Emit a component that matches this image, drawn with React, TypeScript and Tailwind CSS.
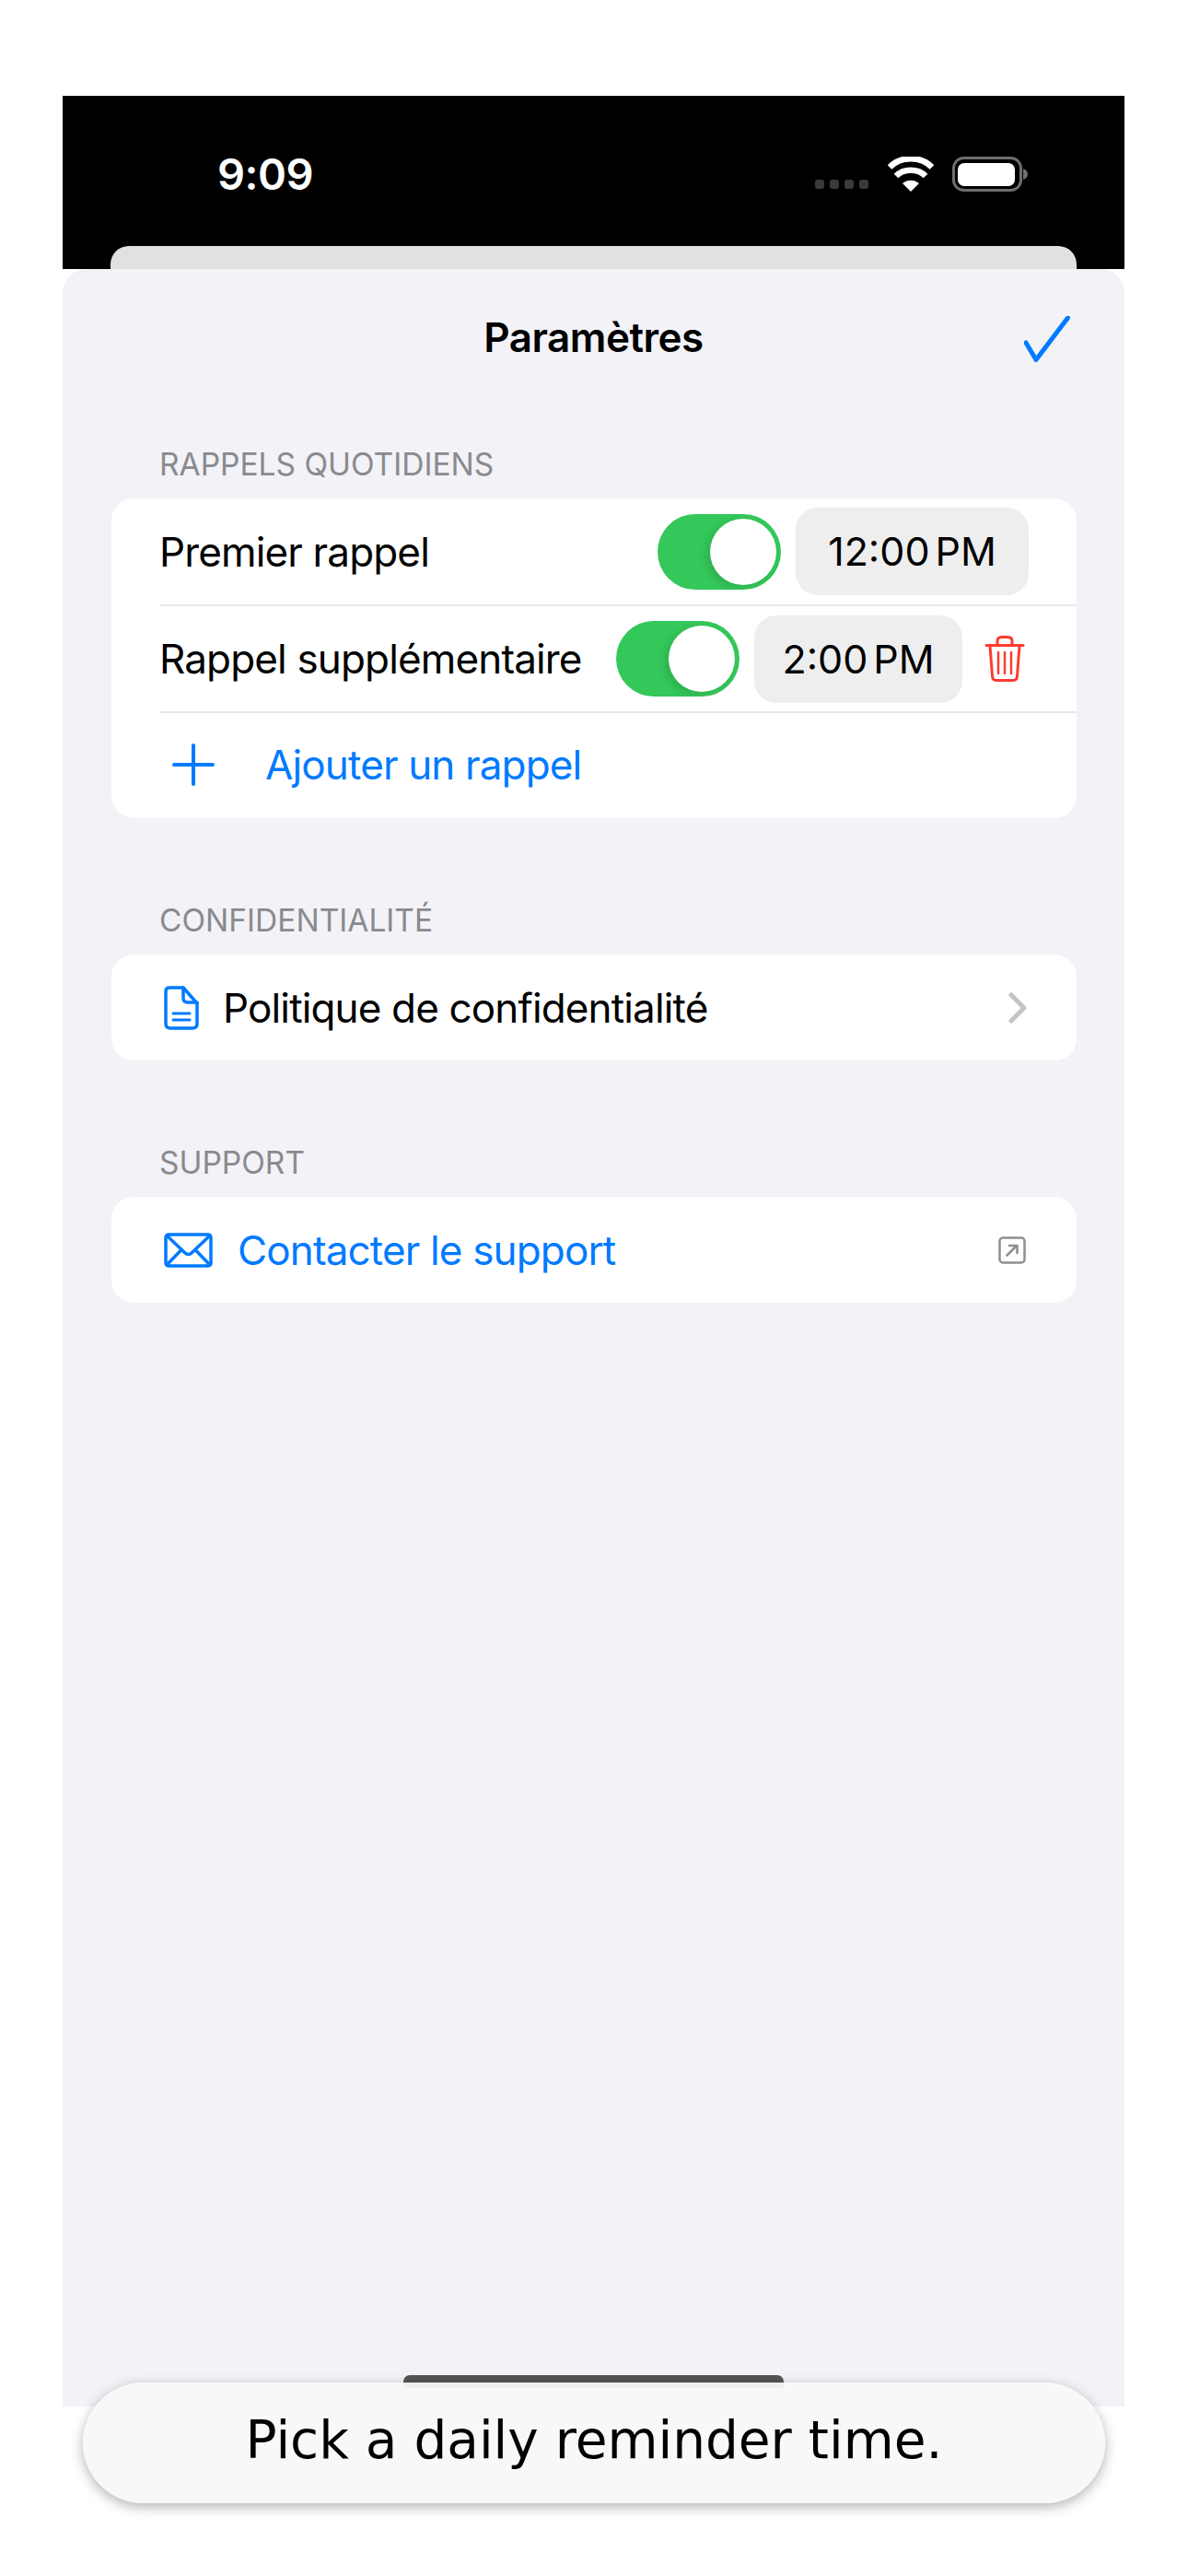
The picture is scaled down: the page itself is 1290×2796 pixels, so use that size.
const sans = "font-['Inter','Liberation_Sans',sans-serif]";

function Toggle() {
  return (
    <div className="flex h-[82px] w-[134px] shrink-0 items-center justify-end rounded-full bg-[#34c759] p-[5px]">
      <div className="h-[72px] w-[72px] rounded-full bg-white shadow-[-4px_3px_8px_rgba(0,0,0,0.12)]" />
    </div>
  );
}

function TimePill({ time, width }: { time: string; width: string }) {
  const [clock, period] = time.split(" ");
  return (
    <div className={`flex h-[95px] shrink-0 items-center justify-center gap-[6px] rounded-[24px] bg-[#eeeeef] text-[43px] text-black ${width}`}>
      <span>{clock}</span>
      <span>{period}</span>
    </div>
  );
}

function SectionLabel({ children }: { children: string }) {
  return (
    <div className="mb-[17px] h-10 pl-[105px] text-[33.5px] leading-10 text-[#8a8a8e]">
      {children}
    </div>
  );
}

function Card({ children }: { children: React.ReactNode }) {
  return <div className="ml-[53px] mr-[52px] overflow-hidden rounded-[24px] bg-white">{children}</div>;
}

function Separator() {
  return <div className="ml-[52px] h-[2px] bg-[#e8e8ea]" />;
}

export default function App() {
  return (
    <div className={`relative h-[2796px] w-[1290px] overflow-hidden bg-white pt-[104px] ${sans}`}>
      <div className="mx-[68px] w-[1153px]">
        {/* Status bar and the card behind the sheet */}
        <div className="bg-black">
          <div className="flex h-[163px] items-center justify-between pl-[168px] pr-[105px] pt-[6px]">
            <span className="mt-[2px] text-[47px] font-semibold tracking-[-0.5px] text-white">9:09</span>
            <div className="flex items-center">
              <div className="mr-[21px] mt-[22px] flex gap-[6px]">
                <div className="h-[10px] w-[10px] rounded-[3px] bg-[#3a3a3c]" />
                <div className="h-[10px] w-[10px] rounded-[3px] bg-[#3a3a3c]" />
                <div className="h-[10px] w-[10px] rounded-[3px] bg-[#3a3a3c]" />
                <div className="h-[10px] w-[10px] rounded-[3px] bg-[#3a3a3c]" />
              </div>
              <svg width="50" height="38" viewBox="0 0 50 38" className="mr-[20px]">
                <path d="M25 38 L16 29 C21 24.5 29 24.5 34 29 Z" fill="#fff" />
                <path d="M9 21 C17 12.5 33 12.5 41 21" fill="none" stroke="#fff" strokeWidth="6.5" />
                <path d="M2 11.5 C14 -1 36 -1 48 11.5" fill="none" stroke="#fff" strokeWidth="6.5" />
              </svg>
              <svg width="82" height="38" viewBox="0 0 82 38">
                <rect x="1.5" y="1.5" width="73" height="35" rx="11" fill="none" stroke="#6e6e70" strokeWidth="3" />
                <rect x="6" y="7" width="62" height="25" rx="7" fill="#fff" />
                <path d="M77 13 C80 14 82 16 82 19 C82 22 80 24 77 25 Z" fill="#6e6e70" />
              </svg>
            </div>
          </div>
          <div className="mx-[52px] h-[25px] rounded-t-[20px] bg-[#e1e1e1]" />
        </div>

        {/* Settings sheet */}
        <div className="flex h-[2320px] flex-col rounded-t-[26px] bg-[#f2f2f7]">
          <div className="relative flex h-[150px] items-center justify-center pb-[2px]">
            <span className="text-[44px] font-semibold tracking-[-0.5px] text-black">Paramètres</span>
            <svg width="50" height="50" viewBox="0 0 50 50" className="absolute right-[59px] top-[51px]">
              <path d="M2 29 L13 47.5 L47.5 2" fill="none" stroke="#007aff" strokeWidth="5" strokeLinecap="round" strokeLinejoin="round" />
            </svg>
          </div>

          <div className="mt-[42px]">
            <SectionLabel>RAPPELS QUOTIDIENS</SectionLabel>
            <Card>
              <div className="flex h-[115px] items-center justify-between pl-[52px] pr-[52px]">
                <span className="text-[44px] tracking-[-0.85px] text-black">Premier rappel</span>
                <div className="flex items-center gap-4">
                  <Toggle />
                  <TimePill time="12:00 PM" width="w-[253px]" />
                </div>
              </div>
              <Separator />
              <div className="flex h-[114px] items-center justify-between pl-[52px] pr-[56px]">
                <span className="text-[44px] tracking-[-0.85px] text-black">Rappel supplémentaire</span>
                <div className="flex items-center gap-4">
                  <Toggle />
                  <TimePill time="2:00 PM" width="w-[226px]" />
                  <svg width="44" height="50" viewBox="0 0 44 50" className="ml-2" fill="none" stroke="#ff3b30" strokeWidth="3" strokeLinecap="round">
                    <path d="M2 10.5 H42" />
                    <path d="M14 10 V6 C14 3 16 1.5 18.5 1.5 H25.5 C28 1.5 30 3 30 6 V10" />
                    <path d="M6 11 L8.5 44 C8.7 47 10.5 48.5 13 48.5 H31 C33.5 48.5 35.3 47 35.5 44 L38 11" />
                    <path d="M15 18 V41 M22 18 V41 M29 18 V41" strokeWidth="2.5" />
                  </svg>
                </div>
              </div>
              <Separator />
              <div className="flex h-[114px] items-center pb-[2px] pl-[66px]">
                <svg width="46" height="46" viewBox="0 0 46 46" fill="none" stroke="#007aff" strokeWidth="4" strokeLinecap="round">
                  <path d="M23 2 V44 M2 23 H44" />
                </svg>
                <span className="ml-[55px] text-[44px] tracking-[-0.85px] text-[#007aff]">Ajouter un rappel</span>
              </div>
            </Card>
          </div>

          <div className="mt-[91px]">
            <SectionLabel>CONFIDENTIALITÉ</SectionLabel>
            <Card>
              <div className="flex h-[115px] items-center pl-[57px] pr-[54px]">
                <svg width="38" height="48" viewBox="0 0 38 48" fill="none" stroke="#007aff" strokeWidth="3.5" strokeLinejoin="round" strokeLinecap="round">
                  <path d="M6 2 H21 L36 19 V41 C36 44.5 34 46 31 46 H7 C4 46 2 44.5 2 41 V6 C2 3.5 3.5 2 6 2 Z" />
                  <path d="M21 2 V13 C21 16 22.5 18 25.5 18 H36" />
                  <path d="M10 30 H28 M10 37 H28" strokeWidth="3" />
                </svg>
                <span className="ml-[26px] text-[44px] tracking-[-0.85px] text-black">Politique de confidentialité</span>
                <svg width="20" height="34" viewBox="0 0 20 34" className="ml-auto" fill="none" stroke="#c4c4c6" strokeWidth="5" strokeLinecap="round" strokeLinejoin="round">
                  <path d="M3 3 L17 17 L3 31" />
                </svg>
              </div>
            </Card>
          </div>

          <div className="mt-[91px]">
            <SectionLabel>SUPPORT</SectionLabel>
            <Card>
              <div className="flex h-[115px] items-center pl-[57px] pr-[55px]">
                <svg width="53" height="38" viewBox="0 0 53 38" fill="none" stroke="#007aff" strokeWidth="3.5" strokeLinejoin="round" strokeLinecap="round">
                  <rect x="2" y="2" width="49" height="34" rx="3" />
                  <path d="M3 3 L23 22 C25 24 28 24 30 22 L50 3" />
                  <path d="M3 35 L18.5 19 M50 35 L34.5 19" />
                </svg>
                <span className="ml-[27px] text-[44px] tracking-[-0.85px] text-[#007aff]">Contacter le support</span>
                <svg width="30" height="30" viewBox="0 0 30 30" className="ml-auto" fill="none" stroke="#8e8e93" strokeLinecap="round" strokeLinejoin="round">
                  <rect x="1.5" y="1.5" width="27" height="27" rx="3.5" strokeWidth="2.5" />
                  <path d="M9.5 20.5 L20 10 M12 10 H20.5 V18" strokeWidth="2.5" />
                </svg>
              </div>
            </Card>
          </div>

          <div className="mx-auto mb-[20px] mt-auto h-[14px] w-[413px] rounded-t-[7px] bg-[#555555]" />
        </div>
      </div>

      {/* Toast over the sheet */}
      <div className="absolute left-[90px] top-[2586px] flex h-[131px] w-[1110px] items-center justify-center rounded-full bg-[#f8f8f8]/95 pb-[5px] text-[56.5px] text-black shadow-[0_4px_14px_rgba(0,0,0,0.3)] font-['DejaVu_Sans',sans-serif]">
        Pick a daily reminder time.
      </div>
    </div>
  );
}
